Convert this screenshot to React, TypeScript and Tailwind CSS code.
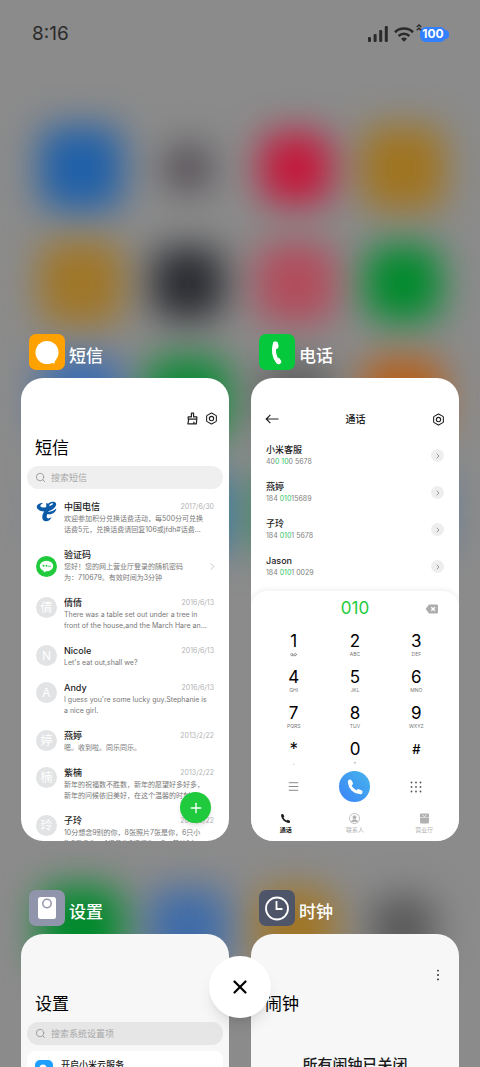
import React from 'react';
import { Bolt, ChevronRight, Menu, Plus, Search, Voicemail, X } from 'lucide-react';

interface Message {
  id: string;
  name: string;
  lines: string[];
  date?: string;
  avatar: React.ReactNode;
  centered?: boolean;
}

interface CallEntry {
  name: string;
  before: string;
  match: string;
  after: string;
}

const Handset: React.FC<{ className?: string }> = ({ className }) => (
  <svg viewBox="0 0 24 24" className={className} fill="none" stroke="currentColor" strokeLinecap="round" aria-hidden="true">
    <path d="M4.6 6 C5 13 11 19 18 19.4" strokeWidth="4" />
    <path d="M5.2 4.8 L6.6 7.4" strokeWidth="5.4" />
    <path d="M16.8 17.6 L19.4 18.9" strokeWidth="5.4" />
  </svg>
);

const TelecomLogo = () => (
  <svg viewBox="0 0 63 63" className="size-[21px] shrink-0" fill="#0b5aa8" aria-hidden="true">
    <path d="M2 17 C4 9 12 5 22 6 C16 9 13 12 13 15 C14 20 26 21 37 17 C48 13 55 8 50 7 C46 6 41 10 38 14 L31 13 C37 5 48 0 56 3 C65 7 60 19 48 26 C32 35 5 34 2 17 Z" />
    <path d="M30 7 C36 6 42 11 41 19 C40 27 33 37 32 46 C32 54 39 54 47 48 C43 58 34 63 26 60 C16 56 18 43 23 34 C28 26 33 18 30 7 Z" />
    <path d="M30 30 C41 34 51 32 61 22 C60 36 46 44 28 38 Z" />
  </svg>
);

const ServiceLogo = () => (
  <svg viewBox="0 0 42 42" className="size-[21px] shrink-0" aria-hidden="true">
    <circle cx="21" cy="21" r="21" fill="#1fcb3c" />
    <ellipse cx="21" cy="20" rx="13.5" ry="10.5" fill="#fff" />
    <path d="M15 28 L16 33 L22 29 Z" fill="#fff" />
    <circle cx="15" cy="19.5" r="2" fill="#1fcb3c" />
    <circle cx="21" cy="19.5" r="2" fill="#1fcb3c" />
    <path d="M25 20.5 H29" stroke="#1fcb3c" strokeWidth="1.6" strokeLinecap="round" />
  </svg>
);

const Initial: React.FC<{ text: string }> = ({ text }) => (
  <span className="flex size-[21px] shrink-0 items-center justify-center rounded-full bg-[#e1e3e5] text-[12px] leading-none text-white">
    {text}
  </span>
);

const messages: Message[] = [
  {
    id: 'telecom',
    name: '中国电信',
    date: '2017/6/30',
    lines: ['欢迎参加积分兑换话费活动，每500分可兑换', '话费5元，兑换话费请回复106或jfdh#话费…'],
    avatar: <TelecomLogo />,
  },
  {
    id: 'codes',
    name: '验证码',
    lines: ['您好！您的网上营业厅登录的随机密码', '为：710679。有效时间为3分钟'],
    avatar: <ServiceLogo />,
    centered: true,
  },
  {
    id: 'qianqian',
    name: '倩倩',
    date: '2016/6/13',
    lines: ['There was a table set out under a tree in', 'front of the house,and the March Hare an…'],
    avatar: <Initial text="倩" />,
  },
  { id: 'nicole', name: 'Nicole', date: '2016/6/13', lines: ["Let's eat out,shall we?"], avatar: <Initial text="N" /> },
  {
    id: 'andy',
    name: 'Andy',
    date: '2016/6/13',
    lines: ["I guess you're some lucky guy.Stephanie is", 'a nice girl.'],
    avatar: <Initial text="A" />,
  },
  { id: 'yanting', name: '燕婷', date: '2013/2/22', lines: ['嗯。收到啦。同乐同乐。'], avatar: <Initial text="婷" /> },
  {
    id: 'zinan',
    name: '紫楠',
    date: '2013/2/22',
    lines: ['新年的祝福数不胜数，新年的愿望好多好多，', '新年的问候依旧美好，在这个温馨的时刻……'],
    avatar: <Initial text="楠" />,
  },
  {
    id: 'ziling',
    name: '子玲',
    date: '2013/2/22',
    lines: ['10分想念9别的你，8张照片7张是你，6只小', '狗5只像你，4根骨头3根归你，2瓜着地1定…'],
    avatar: <Initial text="玲" />,
  },
];

const calls: CallEntry[] = [
  { name: '小米客服', before: '40', match: '0 10', after: '0 5678' },
  { name: '燕婷', before: '184 ', match: '010', after: '15689' },
  { name: '子玲', before: '184 ', match: '010', after: '1 5678' },
  { name: 'Jason', before: '184 ', match: '010', after: '1 0029' },
];

const keys: { digit: string; sub: React.ReactNode }[] = [
  { digit: '1', sub: <Voicemail size={7} strokeWidth={2} /> },
  { digit: '2', sub: 'ABC' },
  { digit: '3', sub: 'DEF' },
  { digit: '4', sub: 'GHI' },
  { digit: '5', sub: 'JKL' },
  { digit: '6', sub: 'MNO' },
  { digit: '7', sub: 'PQRS' },
  { digit: '8', sub: 'TUV' },
  { digit: '9', sub: 'WXYZ' },
  { digit: '*', sub: ',' },
  { digit: '0', sub: '+' },
  { digit: '#', sub: '' },
];

// Home screen icons behind the task switcher, row by row
const wallpaperIcons = [
  'size-[84px] bg-[#2060a8]',
  'size-[48px] bg-[#544e55]',
  'size-[72px] bg-[#c4183c]',
  'size-[84px] bg-[#a07420]',
  'size-[84px] bg-[#a07628]',
  'size-[72px] bg-[#292b30]',
  'size-[80px] bg-[#b24c5c]',
  'size-[76px] bg-[#008a2c]',
  'size-[84px] bg-[#3a6cb0]',
  'size-[84px] bg-[#0c8a36]',
  'size-[74px] bg-[#606060]',
  'size-[82px] bg-[#b5601a]',
  'size-[74px] bg-[#5575a0]',
  'size-[84px] bg-[#2c78a0]',
  'size-[84px] bg-[#3a8a58]',
  'size-[90px] bg-[#56789c]',
];

const dockIcons = [
  'size-[84px] bg-[#008a2c]',
  'size-[80px] bg-[#3f6ca8]',
  'size-[80px] bg-[#a07628]',
  'size-[64px] bg-[#585858]',
];

const Wallpaper = () => (
  <div className="absolute inset-0 overflow-hidden bg-[#8b8b8b] pl-[27px] pr-[23px] pt-[110px]" aria-hidden="true">
    <div className="grid grid-cols-4 blur-[18px]">
      {wallpaperIcons.map((icon, i) => (
        <div key={i} className="flex h-[115px] items-center justify-center">
          <div className={`rounded-[20px] ${icon}`} />
        </div>
      ))}
    </div>
    <div className="mt-[300px] grid grid-cols-4 blur-[18px]">
      {dockIcons.map((icon, i) => (
        <div key={i} className="flex h-[115px] items-center justify-center">
          <div className={`rounded-[20px] ${icon}`} />
        </div>
      ))}
    </div>
  </div>
);

const StatusBar = () => (
  <header className="flex h-[68px] items-center justify-between pl-8 pr-[34px] text-[#2b2b2b]">
    <time className="text-[19px]">8:16</time>
    <div className="flex items-center gap-[6px]">
      <svg viewBox="0 0 20 16" className="h-4 w-5" fill="currentColor" aria-hidden="true">
        <rect x="0" y="11" width="3" height="5" rx="1" />
        <rect x="5.6" y="8" width="3" height="8" rx="1" />
        <rect x="11.2" y="4" width="3" height="12" rx="1" />
        <rect x="16.8" y="0" width="3" height="16" rx="1" />
      </svg>
      <svg viewBox="0 0 20 15" className="h-[15px] w-5" fill="none" stroke="currentColor" strokeWidth="2.6" aria-hidden="true">
        <path d="M1 5.2 C6 0.3 14 0.3 19 5.2" />
        <path d="M4.6 9 C7.7 6 12.3 6 15.4 9" />
        <path d="M7 11.8 Q10 9.2 13 11.8 L10 14.8 Z" fill="currentColor" stroke="none" />
      </svg>
      <div className="relative">
        <span className="flex h-[15px] w-[26px] items-center justify-center rounded-[6px] bg-[#3380ff] text-[12px] font-bold leading-none text-white">
          100
        </span>
        <span className="absolute -right-[3px] top-[3px] h-[9px] w-[4px] rounded-r-full bg-[#3380ff]" />
        <svg viewBox="0 0 6 7" className="absolute -left-[4px] -top-[3px] h-[7px] w-[6px]" fill="none" stroke="currentColor" strokeWidth="1.5" aria-hidden="true">
          <path d="M0.8 3 L3 1 L5.2 3 M0.8 6.2 L3 4.2 L5.2 6.2" />
        </svg>
      </div>
    </div>
  </header>
);

interface TaskProps {
  title: string;
  icon: React.ReactNode;
  className: string;
  children: React.ReactNode;
}

const Task: React.FC<TaskProps> = ({ title, icon, className, children }) => (
  <section className="flex min-w-0 flex-col gap-2">
    <div className="flex h-9 items-end gap-1 pl-2">
      {icon}
      <h2 className="text-[17px] font-medium leading-7 text-white">{title}</h2>
    </div>
    <div className={`relative flex h-[463px] flex-col overflow-hidden rounded-[22px] ${className}`}>{children}</div>
  </section>
);

const SearchBox: React.FC<{ placeholder: string; className: string }> = ({ placeholder, className }) => (
  <label className={`mx-[6px] mt-[6px] flex h-[23px] shrink-0 items-center gap-[5px] rounded-full px-2 ${className}`}>
    <Search size={11} className="shrink-0 text-[#9a9a9a]" />
    <input
      type="search"
      aria-label={placeholder}
      placeholder={placeholder}
      className="min-w-0 flex-1 bg-transparent text-[9px] leading-none outline-none placeholder:text-[#a8a8a8]"
    />
  </label>
);

const MessagesScreen = () => (
  <>
    <div className="flex h-[47px] shrink-0 items-end justify-end gap-[6px] pr-[11px] text-[#222]">
      <button type="button" aria-label="清理">
        <svg viewBox="0 0 24 24" className="size-[13px]" fill="none" stroke="currentColor" strokeWidth="2.2" strokeLinejoin="round">
          <path d="M10 2 H14 V9 H20 V13 H4 V9 H10 Z M5 13 L3.5 22 H19 L20 13 M14 22 L15 18" />
        </svg>
      </button>
      <button type="button" aria-label="设置">
        <Bolt size={13} />
      </button>
    </div>
    <h1 className="mt-[11px] pl-[14px] text-[17px] leading-6 text-black">短信</h1>
    <SearchBox placeholder="搜索短信" className="bg-[#efefef]" />
    <ul className="mt-3 flex flex-col gap-[14px] px-[15px]">
      {messages.map((message) => (
        <li key={message.id} className={`flex gap-[7px] ${message.centered ? 'items-center' : 'items-start'}`}>
          {message.avatar}
          <div className="min-w-0 flex-1">
            <div className="flex items-center justify-between leading-3">
              <h3 className="text-[9px] font-medium text-[#1c1c1c]">{message.name}</h3>
              {message.date && <time className="text-[7px] text-[#b3b3b3]">{message.date}</time>}
            </div>
            {message.lines.map((line) => (
              <p key={line} className="whitespace-nowrap text-[7px] leading-[11px] text-[#777]">
                {line}
              </p>
            ))}
          </div>
          {message.centered && <ChevronRight size={11} strokeWidth={1.5} className="-mr-1 text-[#aaa]" />}
        </li>
      ))}
    </ul>
    <button
      type="button"
      aria-label="新建短信"
      className="absolute bottom-[18px] right-[18px] flex size-[31px] items-center justify-center rounded-full bg-[#1fcb3c] text-white shadow-md"
    >
      <Plus size={16} strokeWidth={2} />
    </button>
  </>
);

const PhoneScreen = () => (
  <>
    <div className="flex h-[48px] shrink-0 items-end justify-between px-[14px] text-[#222]">
      <button type="button" aria-label="返回">
        <svg viewBox="0 0 14 14" className="size-[14px]" fill="none" stroke="currentColor" strokeWidth="1.2">
          <path d="M13.5 7 H1.2 M5.4 2.8 L1.2 7 L5.4 11.2" />
        </svg>
      </button>
      <h1 className="text-[10px] font-medium leading-[14px]">通话</h1>
      <button type="button" aria-label="设置">
        <Bolt size={13} />
      </button>
    </div>
    <ul className="mt-[18px] flex flex-col gap-[14px] px-[15px]">
      {calls.map((call) => (
        <li key={call.name} className="flex items-center justify-between">
          <div>
            <h3 className="text-[9px] font-medium leading-3 text-[#1c1c1c]">{call.name}</h3>
            <p className="text-[7px] leading-[11px] text-[#808080]">
              {call.before}
              <span className="text-[#2cc565]">{call.match}</span>
              {call.after}
            </p>
          </div>
          <button
            type="button"
            aria-label={call.name}
            className="flex size-[13px] items-center justify-center rounded-full bg-[#eeeeee] text-[#999]"
          >
            <ChevronRight size={8} strokeWidth={3} />
          </button>
        </li>
      ))}
    </ul>
    <div className="mt-[13px] flex-1 rounded-t-[16px] bg-white shadow-[0_-1px_6px_rgba(0,0,0,0.08)]">
      <div className="grid h-[35px] grid-cols-3 items-center px-[20px]">
        <output className="col-start-2 text-center text-[17px] text-[#1fcb3c]">010</output>
        <button type="button" aria-label="删除" className="justify-self-end">
          <svg viewBox="0 0 14 10" className="h-[10px] w-[14px]" aria-hidden="true">
            <path d="M4 0.6 H12 Q13 0.6 13 1.6 V8.4 Q13 9.4 12 9.4 H4 L0.6 5 Z" fill="#adadad" />
            <path d="M6.3 3.2 L10 6.8 M10 3.2 L6.3 6.8" stroke="#fff" strokeWidth="1.4" />
          </svg>
        </button>
      </div>
      <div className="mt-[5px] grid grid-cols-3 gap-y-[10px] px-3">
        {keys.map((key) => (
          <button key={key.digit} type="button" className="flex h-[26px] flex-col items-center text-black">
            <span className={key.digit === '#' ? 'text-[13px] font-medium leading-5' : 'text-[17px] leading-5'}>{key.digit}</span>
            <span className="text-[5px] leading-[6px] text-[#777]">{key.sub}</span>
          </button>
        ))}
      </div>
      <div className="mt-[6px] grid grid-cols-3 items-center justify-items-center px-3">
        <button type="button" aria-label="菜单" className="text-[#777]">
          <Menu size={13} strokeWidth={1.6} />
        </button>
        <button
          type="button"
          aria-label="拨号"
          className="flex size-[31px] items-center justify-center rounded-full bg-gradient-to-tr from-[#3c82f8] to-[#48b4ea] text-white"
        >
          <Handset className="size-[18px]" />
        </button>
        <button type="button" aria-label="拨号盘" className="text-[#555]">
          <svg viewBox="0 0 12 12" className="size-3" fill="currentColor">
            {[1.5, 6, 10.5].map((y) => [1.5, 6, 10.5].map((x) => <circle key={`${x}-${y}`} cx={x} cy={y} r="0.9" />))}
          </svg>
        </button>
      </div>
      <nav className="mt-[11px] grid grid-cols-3 text-[6px] leading-[8px] text-[#b0b0b0]">
        <button type="button" className="flex flex-col items-center gap-[2px] font-bold text-[#222]">
          <Handset className="size-[11px]" />
          通话
        </button>
        <button type="button" className="flex flex-col items-center gap-[2px]">
          <svg viewBox="0 0 22 22" className="size-[11px]" fill="none" stroke="currentColor" strokeWidth="1.6" aria-hidden="true">
            <circle cx="11" cy="11" r="10" />
            <circle cx="11" cy="8.5" r="3" fill="currentColor" />
            <path d="M5 17 C6 12.5 16 12.5 17 17 Z" fill="currentColor" />
          </svg>
          联系人
        </button>
        <button type="button" className="flex flex-col items-center gap-[2px]">
          <svg viewBox="0 0 22 22" className="size-[11px]" aria-hidden="true">
            <path d="M4 1 H18 Q20 1 20 3 V8 H2 V3 Q2 1 4 1 Z M2 9 H20 V18 Q20 21 17 21 H5 Q2 21 2 18 Z" fill="currentColor" />
            <path d="M7 4 L11 7 L15 4" stroke="#fff" strokeWidth="1.5" fill="none" />
          </svg>
          营业厅
        </button>
      </nav>
    </div>
  </>
);

const SettingsScreen = () => (
  <>
    <h1 className="pl-[14px] pt-[58px] text-[17px] leading-6 text-black">设置</h1>
    <SearchBox placeholder="搜索系统设置项" className="bg-[#e6e6e6]" />
    <div className="mx-[6px] mt-[6px] flex-1 rounded-[8px] bg-white px-2 pt-[9px]">
      <a href="#cloud" className="flex items-start gap-2">
        <span className="flex size-[18px] items-center justify-center rounded-[5px] bg-[#1e9ffc]">
          <svg viewBox="0 0 18 18" className="size-[18px]" fill="#fff" aria-hidden="true">
            <circle cx="8" cy="8" r="3.5" />
            <circle cx="11.5" cy="10" r="3" />
            <rect x="4" y="8.5" width="10" height="4.5" rx="2.2" />
          </svg>
        </span>
        <span className="text-[9px] font-medium leading-[10px] text-[#1c1c1c]">开启小米云服务</span>
      </a>
    </div>
  </>
);

const ClockScreen = () => (
  <>
    <div className="flex h-[58px] shrink-0 items-end justify-end pb-[10px] pr-[14px]">
      <button type="button" aria-label="更多" className="text-[#222]">
        <svg viewBox="0 0 14 14" className="size-[14px]" fill="currentColor">
          <circle cx="7" cy="2.6" r="0.9" />
          <circle cx="7" cy="7" r="0.9" />
          <circle cx="7" cy="11.4" r="0.9" />
        </svg>
      </button>
    </div>
    <h1 className="pl-[14px] text-[17px] leading-6 text-black">闹钟</h1>
    <p className="mt-[39px] text-center text-[15px] font-medium leading-5 text-[#1c1c1c]">所有闹钟已关闭</p>
  </>
);

const MessagesIcon = () => (
  <svg viewBox="0 0 36 36" className="size-9" aria-hidden="true">
    <rect width="36" height="36" rx="7" fill="#ffa200" />
    <circle cx="18" cy="18.5" r="11.5" fill="#fff" />
    <path d="M23 26 L27 23 L25.4 29.4 Q23 29.6 21 28.6 Z" fill="#fff" />
  </svg>
);

const PhoneIcon = () => (
  <svg viewBox="0 0 36 36" className="size-9" fill="none" stroke="#fff" strokeLinecap="round" aria-hidden="true">
    <rect width="36" height="36" rx="7" fill="#05c83c" stroke="none" />
    <path d="M16 10 C14 16 15 23 19 27.5" strokeWidth="4.2" />
    <path d="M16.6 10.2 L16.8 12.2" strokeWidth="5.4" />
    <path d="M18.8 26.4 L19.6 27.6" strokeWidth="5.2" />
  </svg>
);

const SettingsIcon = () => (
  <svg viewBox="0 0 36 36" className="size-9" aria-hidden="true">
    <rect width="36" height="36" rx="7" fill="#9195ab" />
    <rect x="9" y="7" width="18" height="22" rx="2.5" fill="#fff" />
    <circle cx="18" cy="13.5" r="4.2" fill="none" stroke="#9195ab" strokeWidth="1.5" />
  </svg>
);

const ClockIcon = () => (
  <svg viewBox="0 0 36 36" className="size-9" fill="none" stroke="#fff" aria-hidden="true">
    <rect width="36" height="36" rx="7" fill="#4f5568" stroke="none" />
    <circle cx="18" cy="18.5" r="11" strokeWidth="1.8" />
    <path d="M17.5 11 V19 H23.5" strokeWidth="1.8" />
  </svg>
);

const App = () => (
  <div className="relative h-screen overflow-hidden font-['Inter','Noto_Sans_CJK_SC',sans-serif]">
    <Wallpaper />
    <div className="relative">
      <StatusBar />
      <main className="grid grid-cols-2 gap-x-[22px] gap-y-[49px] px-[21px] pt-[266px]">
        <Task title="短信" icon={<MessagesIcon />} className="bg-white">
          <MessagesScreen />
        </Task>
        <Task title="电话" icon={<PhoneIcon />} className="bg-white">
          <PhoneScreen />
        </Task>
        <Task title="设置" icon={<SettingsIcon />} className="bg-[#f7f7f7]">
          <SettingsScreen />
        </Task>
        <Task title="时钟" icon={<ClockIcon />} className="bg-[#f7f7f7]">
          <ClockScreen />
        </Task>
      </main>
    </div>
    <button
      type="button"
      aria-label="清除全部"
      className="absolute bottom-[49px] left-1/2 flex size-[62px] -translate-x-1/2 items-center justify-center rounded-full bg-white text-black shadow-lg"
    >
      <X size={22} strokeWidth={2.4} />
    </button>
  </div>
);

export default App;
